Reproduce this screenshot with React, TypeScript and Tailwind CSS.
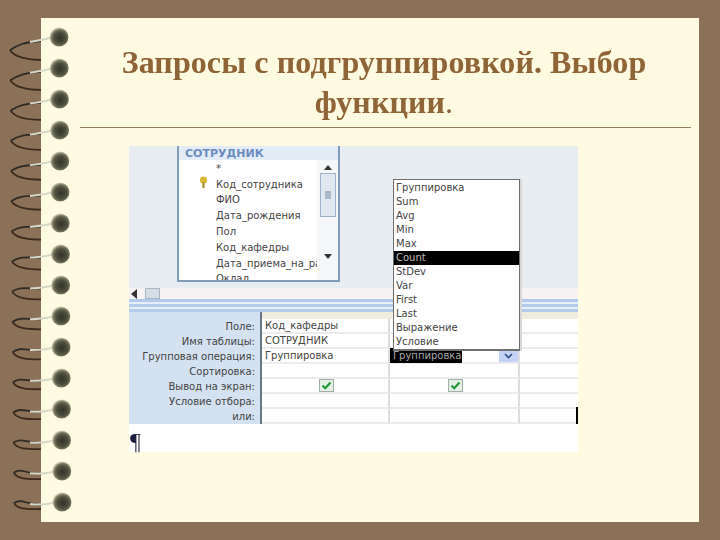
import React from "react";

const rings = Array.from({ length: 16 }, (_, i) => i);
const fields = ["*", "Код_сотрудника", "ФИО", "Дата_рождения", "Пол", "Код_кафедры", "Дата_приема_на_ра", "Оклад"];
const fns = ["Группировка", "Sum", "Avg", "Min", "Max", "Count", "StDev", "Var", "First", "Last", "Выражение", "Условие"];
const rows = [
  ["Поле:", "Код_кафедры", ""],
  ["Имя таблицы:", "СОТРУДНИК", ""],
  ["Групповая операция:", "Группировка", "sel"],
  ["Сортировка:", "", ""],
  ["Вывод на экран:", "check", "check"],
  ["Условие отбора:", "", ""],
  ["или:", "", ""],
];

function Spiral() {
  return (
    <svg className="absolute left-0 top-0 blur-[0.5px]" width="80" height="540" viewBox="0 0 80 540">
      <defs>
        <radialGradient id="ball" cx="0.55" cy="0.55" r="0.55">
          <stop offset="0" stopColor="#33342a" />
          <stop offset="0.55" stopColor="#4e4f3e" />
          <stop offset="0.8" stopColor="#77785f" />
          <stop offset="1" stopColor="#a9a98f" stopOpacity="0.5" />
        </radialGradient>
      </defs>
      {rings.map((i) => {
        const t = i / 15;
        const y = 37 + i * 31;
        const bx = 59 + t * 3;
        const tipY = y + 13 - t * 12;
        const endY = y + 23 - t * 16;
        const tipX = 10 + t * 4;
        return (
          <g key={i}>
            <path
              d={`M41 ${endY} C28 ${endY} ${tipX + 4} ${tipY + 7} ${tipX} ${tipY}`}
              fill="none"
              stroke="#3d2b1e"
              strokeWidth="1.8"
            />
            <path
              d={`M${tipX} ${tipY} C${tipX + 8} ${tipY - 5} 24 ${y + 5 - t * 3} 41 ${y + 4 - t * 1}`}
              fill="none"
              stroke="#2f2a22"
              strokeWidth="1.8"
            />
            <path
              d={`M30 ${y + 5 - t * 3} C40 ${y + 3} 44 ${y + 3} ${bx - 6} ${y}`}
              fill="none"
              stroke="#d8d8c8"
              strokeWidth="2"
            />
            <circle cx={bx} cy={y} r="9.5" fill="url(#ball)" />
          </g>
        );
      })}
    </svg>
  );
}

function Check() {
  return (
    <span className="flex h-[13px] w-[15px] items-center justify-center border border-[#9fb0a8] bg-[#e6efe6]">
      <svg width="11" height="9" viewBox="0 0 11 9">
        <path d="M1.5 4.5 L4.2 7.2 L9.5 1.5" fill="none" stroke="#1f9a3a" strokeWidth="2.2" />
      </svg>
    </span>
  );
}

function Cell({ v, last }: { v: string; last?: boolean }) {
  const sel = v === "sel";
  return (
    <div className={`relative flex h-[15px] items-center border-b-2 border-[#ececec] bg-white ${sel ? "pl-0" : "pl-[3px]"} ${last ? "" : "border-r-2 border-r-[#dcdcdc]"}`}>
      {v === "check" ? (
        <span className="flex w-full justify-center"><Check /></span>
      ) : sel ? (
        <>
          <span className="flex h-[15px] items-center bg-black pl-[3px] pr-[1px] text-[#a8a8a8]">Группировка</span>
          <span className="absolute right-0 top-[1px] flex h-[12px] w-[19px] items-center justify-center bg-[#c4d3f5]">
            <svg width="9" height="6" viewBox="0 0 9 6">
              <path d="M1 1 L4.5 4.5 L8 1" fill="none" stroke="#2f4d8c" strokeWidth="1.6" />
            </svg>
          </span>
        </>
      ) : (
        <span>{v}</span>
      )}
    </div>
  );
}

export default function App() {
  return (
    <div className="relative h-[540px] w-[720px] overflow-hidden bg-[#8b7158] pl-[41px] pt-[18px] font-['DejaVu_Sans',sans-serif]">
      <div className="h-[504px] w-[658px] bg-[#fffbe3] pt-[24px]">
        <h1 className="text-center font-['Liberation_Serif',serif] text-[32px] font-bold leading-[40px] tracking-[0.1px] text-[#8f6437] blur-[0.3px]">
          <span className="block pl-[28px]">Запросы с подгруппировкой. Выбор</span>
          <span className="block pl-[28px]">функции<span className="font-normal">.</span></span>
        </h1>
        <div className="ml-[39px] mt-[5px] h-px w-[611px] bg-[#94815f]" />
        <div className="relative ml-[88px] mt-[18px] w-[449px] text-[10px] leading-none text-[#444444] blur-[0.55px]">
          {/* upper pane */}
          <div className="h-[142px] bg-[#e8edf2] pl-[48px]">
            <div className="h-[136px] w-[163px] overflow-hidden border-2 border-t-0 border-[#7f9db9] bg-white">
              <div className="h-[14px] bg-[#e3ecf6] pl-[6px] pt-[2px] text-[11px] font-bold text-[#6c8cc0]">СОТРУДНИК</div>
              <div className="flex">
                <div className="relative w-[138px] pl-[37px] pt-[1px]">
                  {fields.map((f) => (
                    <div key={f} className="relative flex h-[15.8px] items-center overflow-hidden whitespace-nowrap">
                      {f}
                    </div>
                  ))}
                  <svg className="absolute left-[20px] top-[16px]" width="9" height="13" viewBox="0 0 9 13">
                    <circle cx="4.5" cy="4" r="3.6" fill="#d8b83a" />
                    <rect x="3.4" y="6" width="2.2" height="6" fill="#a88b2a" />
                  </svg>
                </div>
                <div className="flex w-[21px] flex-col items-center bg-[#f4f6f8] pt-[5px]">
                  <svg width="10" height="5" viewBox="0 0 10 5"><path d="M1 5 L5 0 L9 5 Z" fill="#333" /></svg>
                  <div className="mt-[3px] flex h-[44px] w-[16px] items-center justify-center border border-[#9fb3c8] bg-[#dfe7f0]">
                    <div className="h-[8px] w-[6px] bg-[#aab8c6]" />
                  </div>
                  <svg className="mt-[37px]" width="10" height="5" viewBox="0 0 10 5"><path d="M1 0 L5 5 L9 0 Z" fill="#333" /></svg>
                </div>
              </div>
            </div>
          </div>
          {/* scroll strip */}
          <div className="flex h-[11px] items-start bg-[#f6f1f2] pl-[2px]">
            <svg className="mt-[1px]" width="6" height="10" viewBox="0 0 6 10"><path d="M6 0 L0 5 L6 10 Z" fill="#333" /></svg>
            <div className="ml-[8px] h-[11px] w-[15px] border border-[#a8b6c4] bg-[#d5dde6]" />
          </div>
          {/* splitter */}
          <div className="h-[13px] bg-[repeating-linear-gradient(180deg,#b4caea_0px,#b4caea_3px,#e6eef8_3px,#e6eef8_5px)]" />
          {/* lower grid */}
          <div className="grid grid-cols-[131px_130px_130px_58px] bg-[#d3e1f0]">
            <div className="h-[7px]" />
            <div className="col-span-3 h-[7px] border-l-2 border-[#667788] bg-[#efece0]" />
            {rows.map((r) => (
              <React.Fragment key={r[0]}>
                <div className="flex h-[15px] items-center justify-end whitespace-nowrap pr-[5px]">{r[0]}</div>
                <div className="border-l-2 border-[#667788]"><Cell v={r[1]} /></div>
                <Cell v={r[2]} />
                <Cell v="" last />
              </React.Fragment>
            ))}
          </div>
          {/* white strip */}
          <div className="relative h-[28px] bg-white pl-[1px] pt-[6px] font-['Liberation_Serif',serif] text-[24px] leading-[22px] text-[#1c1c3c]">
            ¶
            <div className="absolute right-0 top-[-17px] h-[17px] w-[2px] bg-black" />
          </div>
          {/* dropdown */}
          <div className="absolute left-[264px] top-[33px] w-[127px] border border-[#6f6f6f] border-b-2 bg-white pt-[1px] shadow-[2px_0_0_#d8d8d8]">
            {fns.map((f) => (
              <div key={f} className={`flex h-[14px] items-center pl-[2px] ${f === "Count" ? "bg-black text-[#bdbdbd]" : ""}`}>
                {f}
              </div>
            ))}
          </div>
        </div>
      </div>
      <Spiral />
    </div>
  );
}
